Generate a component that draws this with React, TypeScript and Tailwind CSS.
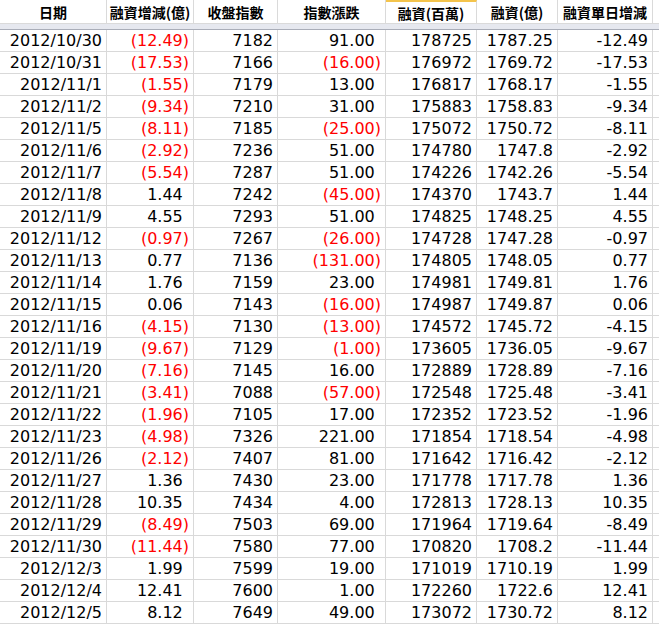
const rows: string[][] = [
  ["2012/10/30", "(12.49)", "7182", "91.00", "178725", "1787.25", "-12.49"],
  ["2012/10/31", "(17.53)", "7166", "(16.00)", "176972", "1769.72", "-17.53"],
  ["2012/11/1", "(1.55)", "7179", "13.00", "176817", "1768.17", "-1.55"],
  ["2012/11/2", "(9.34)", "7210", "31.00", "175883", "1758.83", "-9.34"],
  ["2012/11/5", "(8.11)", "7185", "(25.00)", "175072", "1750.72", "-8.11"],
  ["2012/11/6", "(2.92)", "7236", "51.00", "174780", "1747.8", "-2.92"],
  ["2012/11/7", "(5.54)", "7287", "51.00", "174226", "1742.26", "-5.54"],
  ["2012/11/8", "1.44", "7242", "(45.00)", "174370", "1743.7", "1.44"],
  ["2012/11/9", "4.55", "7293", "51.00", "174825", "1748.25", "4.55"],
  ["2012/11/12", "(0.97)", "7267", "(26.00)", "174728", "1747.28", "-0.97"],
  ["2012/11/13", "0.77", "7136", "(131.00)", "174805", "1748.05", "0.77"],
  ["2012/11/14", "1.76", "7159", "23.00", "174981", "1749.81", "1.76"],
  ["2012/11/15", "0.06", "7143", "(16.00)", "174987", "1749.87", "0.06"],
  ["2012/11/16", "(4.15)", "7130", "(13.00)", "174572", "1745.72", "-4.15"],
  ["2012/11/19", "(9.67)", "7129", "(1.00)", "173605", "1736.05", "-9.67"],
  ["2012/11/20", "(7.16)", "7145", "16.00", "172889", "1728.89", "-7.16"],
  ["2012/11/21", "(3.41)", "7088", "(57.00)", "172548", "1725.48", "-3.41"],
  ["2012/11/22", "(1.96)", "7105", "17.00", "172352", "1723.52", "-1.96"],
  ["2012/11/23", "(4.98)", "7326", "221.00", "171854", "1718.54", "-4.98"],
  ["2012/11/26", "(2.12)", "7407", "81.00", "171642", "1716.42", "-2.12"],
  ["2012/11/27", "1.36", "7430", "23.00", "171778", "1717.78", "1.36"],
  ["2012/11/28", "10.35", "7434", "4.00", "172813", "1728.13", "10.35"],
  ["2012/11/29", "(8.49)", "7503", "69.00", "171964", "1719.64", "-8.49"],
  ["2012/11/30", "(11.44)", "7580", "77.00", "170820", "1708.2", "-11.44"],
  ["2012/12/3", "1.99", "7599", "19.00", "171019", "1710.19", "1.99"],
  ["2012/12/4", "12.41", "7600", "1.00", "172260", "1722.6", "12.41"],
  ["2012/12/5", "8.12", "7649", "49.00", "173072", "1730.72", "8.12"],
];

const headers = ["日期", "融資增減(億)", "收盤指數", "指數漲跌", "融資(百萬)", "融資(億)", "融資單日增減"];

// columns 1 and 3 use the accounting format: negatives in red brackets
const accounting = [1, 3];

const cols = "grid grid-cols-[107px_87px_84px_108px_91px_81px_95px_1fr]";

function Value({ text, col }: { text: string; col: number }) {
  if (!accounting.includes(col)) return <>{text}</>;
  if (text.startsWith("(")) return <span className="text-[#ff0000]">{text}</span>;
  return (
    <>
      {text}
      <span className="invisible">)</span>
    </>
  );
}

export default function App() {
  return (
    <div className="h-[626px] w-[659px] overflow-hidden bg-white font-['DejaVu_Sans',sans-serif] text-[16px] text-black">
      <div className={`${cols} h-[24px] border-b border-[#dadada]`}>
        {headers.map((h, i) => (
          <div
            key={h}
            className={`flex items-center justify-center border-r border-[#dadada] font-['Noto_Sans_CJK_TC',sans-serif] text-[14px] font-bold leading-none ${
              i === 4 ? "border-t-2 border-t-[#f4c44c]" : ""
            }`}
          >
            {h}
          </div>
        ))}
        <div />
      </div>
      <div className="h-[6px] border-b border-[#a9adb8] bg-[#e6e8ef]" />
      {rows.map((r) => (
        <div key={r[0]} className={`${cols} h-[22px]`}>
          {r.map((v, i) => (
            <div
              key={i}
              className="flex items-center justify-end whitespace-nowrap border-r border-b border-[#d9d9d9] pr-[4px] leading-none"
            >
              <Value text={v} col={i} />
            </div>
          ))}
          <div className="border-b border-[#d9d9d9]" />
        </div>
      ))}
    </div>
  );
}
